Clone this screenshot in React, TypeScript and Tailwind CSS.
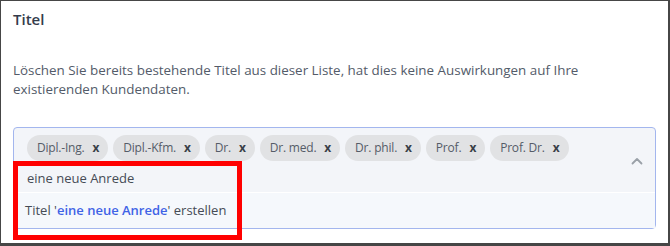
import React from 'react';

const chips = ['Dipl.-Ing.', 'Dipl.-Kfm.', 'Dr.', 'Dr. med.', 'Dr. phil.', 'Prof.', 'Prof. Dr.'];

const Chip: React.FC<{ label: string }> = ({ label }) => (
  <span className="flex h-[26px] items-center gap-[8px] rounded-full bg-[#e1e2e4] pl-[10px] pr-[9px] text-[12px] tracking-[-0.2px] text-[#555c68]">
    <span>{label}</span>
    <span className="text-[12px] font-bold leading-none text-[#3a3f48]">x</span>
  </span>
);

export default function App() {
  return (
    <div className="relative h-[246px] w-[670px] border-b-[3px] border-l border-r-2 border-t border-[#464646] bg-white px-3 font-['Open_Sans',sans-serif]">
      <h2 className="pt-[8px] text-[15px] font-semibold leading-5 text-[#343c4c]">Titel</h2>

      <p className="mt-[32px] text-[13.4px] leading-[19px] text-[#535b69]">
        Löschen Sie bereits bestehende Titel aus dieser Liste, hat dies keine Auswirkungen auf Ihre
        <br />
        existierenden Kundendaten.
      </p>

      <div className="mt-[28px] rounded-[4px] border border-[#a3b6ee] bg-[#f3f5f9]">
        <div className="flex">
          <div className="flex-1">
            <div className="flex gap-[5px] pl-[13px] pt-[7px]">
              {chips.map((c) => (
                <Chip key={c} label={c} />
              ))}
            </div>
            <div className="flex h-[31px] items-center pl-[13px] pt-[5px] text-[13px] text-[#454b55]">eine neue Anrede</div>
          </div>
          <div className="flex w-[36px] items-center justify-center pt-[2px]">
            <svg width="12" height="8" viewBox="0 0 12 8" fill="none">
              <path d="M1.5 6.5 L6 2 L10.5 6.5" stroke="#9aa0a8" strokeWidth="1.8" strokeLinecap="round" strokeLinejoin="round" />
            </svg>
          </div>
        </div>
        <div className="h-px bg-white" />
        <div className="flex h-[35px] items-center bg-[#f5f8fc] pl-[11px] text-[13px] text-[#454b55]">
          <span>
            Titel '<span className="font-semibold text-[#3f63e6]">eine neue Anrede</span>' erstellen
          </span>
        </div>
      </div>

      {/* annotation box */}
      <div className="absolute left-[12px] top-[160px] h-[79px] w-[229px] border-[5px] border-[#ff0000]" />
    </div>
  );
}
